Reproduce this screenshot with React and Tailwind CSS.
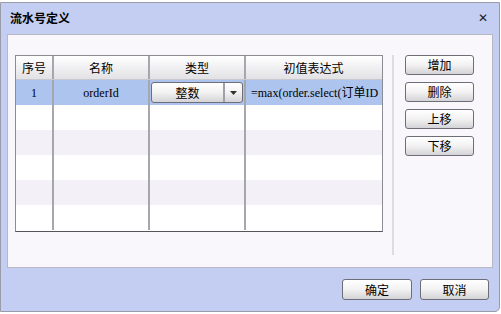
import React from 'react';

const cjk = { fontFamily: '"Noto Sans CJK SC", "Liberation Sans", sans-serif' };
const serif = { fontFamily: '"Liberation Serif", "Noto Sans CJK SC", serif' };

function Btn({ label, w = 'w-[69px]', h = 'h-[20px]' }) {
  return (
    <button
      className={`${w} ${h} flex items-center justify-center rounded-[3px] border border-[#6e6e78] bg-gradient-to-b from-white via-[#f2f2f2] to-[#d4d4d8] text-[12px] leading-none text-black`}
      style={cjk}
    >
      {label}
    </button>
  );
}

const cols = ['w-[38px]', 'w-[96px]', 'w-[96px]', 'w-[135px]'];
const heads = ['序号', '名称', '类型', '初值表达式'];

function EmptyRow({ alt }) {
  return (
    <div className={`flex h-[25px] ${alt ? 'bg-[#f3f0f8]' : 'bg-white'}`}>
      {cols.map((c, i) => (
        <div key={i} className={`${c} h-full ${i < 3 ? 'border-r-2 border-[#a6a6ae]' : ''}`} />
      ))}
    </div>
  );
}

export default function App() {
  return (
    <div className="w-[501px] h-[314px] bg-white pt-[2px]">
      <div className="w-[500px] h-[310px] bg-[#c4cdf2] border border-[#9a9caa] rounded-br-[5px] flex flex-col">
        {/* title bar */}
        <div className="h-[31px] flex items-center justify-between pl-[9px] pr-[11px] pb-[1px]">
          <span className="text-[12px] font-bold text-black" style={cjk}>流水号定义</span>
          <span className="text-[12px] font-bold text-[#222] leading-none" style={{ fontFamily: '"DejaVu Sans", sans-serif' }}>✕</span>
        </div>

        {/* content panel */}
        <div className="ml-[6px] w-[486px] h-[234px] bg-[#f9f7fb] border border-[#b8b8c4] flex pt-[20px] pl-[7px]">
          {/* table */}
          <div className="w-[368px] h-[177px] border border-[#8c8c94] border-b-[#55555c] bg-white flex flex-col">
            <div className="flex h-[24px] bg-gradient-to-b from-white to-[#e2e2e6] border-b border-[#c8c8d0]">
              {heads.map((t, i) => (
                <div
                  key={t}
                  className={`${cols[i]} h-full flex items-center justify-center text-[12px] text-black ${i < 3 ? 'border-r-2 border-[#a6a6ae]' : ''}`}
                  style={cjk}
                >
                  {t}
                </div>
              ))}
            </div>
            <div className="flex h-[25px] bg-[#acc4ee]">
              <div className="w-[38px] h-full flex items-center justify-center text-[12px] border-r-2 border-[#a6a6ae]" style={serif}>1</div>
              <div className="w-[96px] h-full flex items-center justify-center text-[12px] border-r-2 border-[#a6a6ae]" style={serif}>orderId</div>
              <div className="w-[96px] h-full flex items-center px-[1px] border-r-2 border-[#a6a6ae]">
                <div className="w-[94px] h-[21px] rounded-[3px] border border-[#6e6e78] bg-gradient-to-b from-white via-[#f2f2f2] to-[#d4d4d8] flex">
                  <div className="flex-1 flex items-center justify-center text-[12px] border-r-2 border-[#a0a0a8]" style={cjk}>整数</div>
                  <div className="w-[17px] flex items-center justify-center">
                    <svg width="7" height="4" viewBox="0 0 7 4"><path d="M0 0h7L3.5 4z" fill="#333" /></svg>
                  </div>
                </div>
              </div>
              <div className="w-[135px] h-full flex items-center pl-[5px] overflow-hidden whitespace-nowrap text-[12px]" style={serif}>
                =max(order.select(订单ID
              </div>
            </div>
            <EmptyRow />
            <EmptyRow alt />
            <EmptyRow />
            <EmptyRow alt />
            <EmptyRow />
          </div>

          {/* separator */}
          <div className="ml-[9px] w-[2px] h-[200px] bg-[#dcdce4]" />

          {/* side buttons */}
          <div className="ml-[11px] flex flex-col gap-[7px]">
            <Btn label="增加" />
            <Btn label="删除" />
            <Btn label="上移" />
            <Btn label="下移" />
          </div>
        </div>

        {/* footer */}
        <div className="flex justify-end gap-[8px] pr-[10px] pt-[11px]">
          <Btn label="确定" w="w-[70px]" h="h-[21px]" />
          <Btn label="取消" w="w-[69px]" h="h-[21px]" />
        </div>
      </div>
    </div>
  );
}
